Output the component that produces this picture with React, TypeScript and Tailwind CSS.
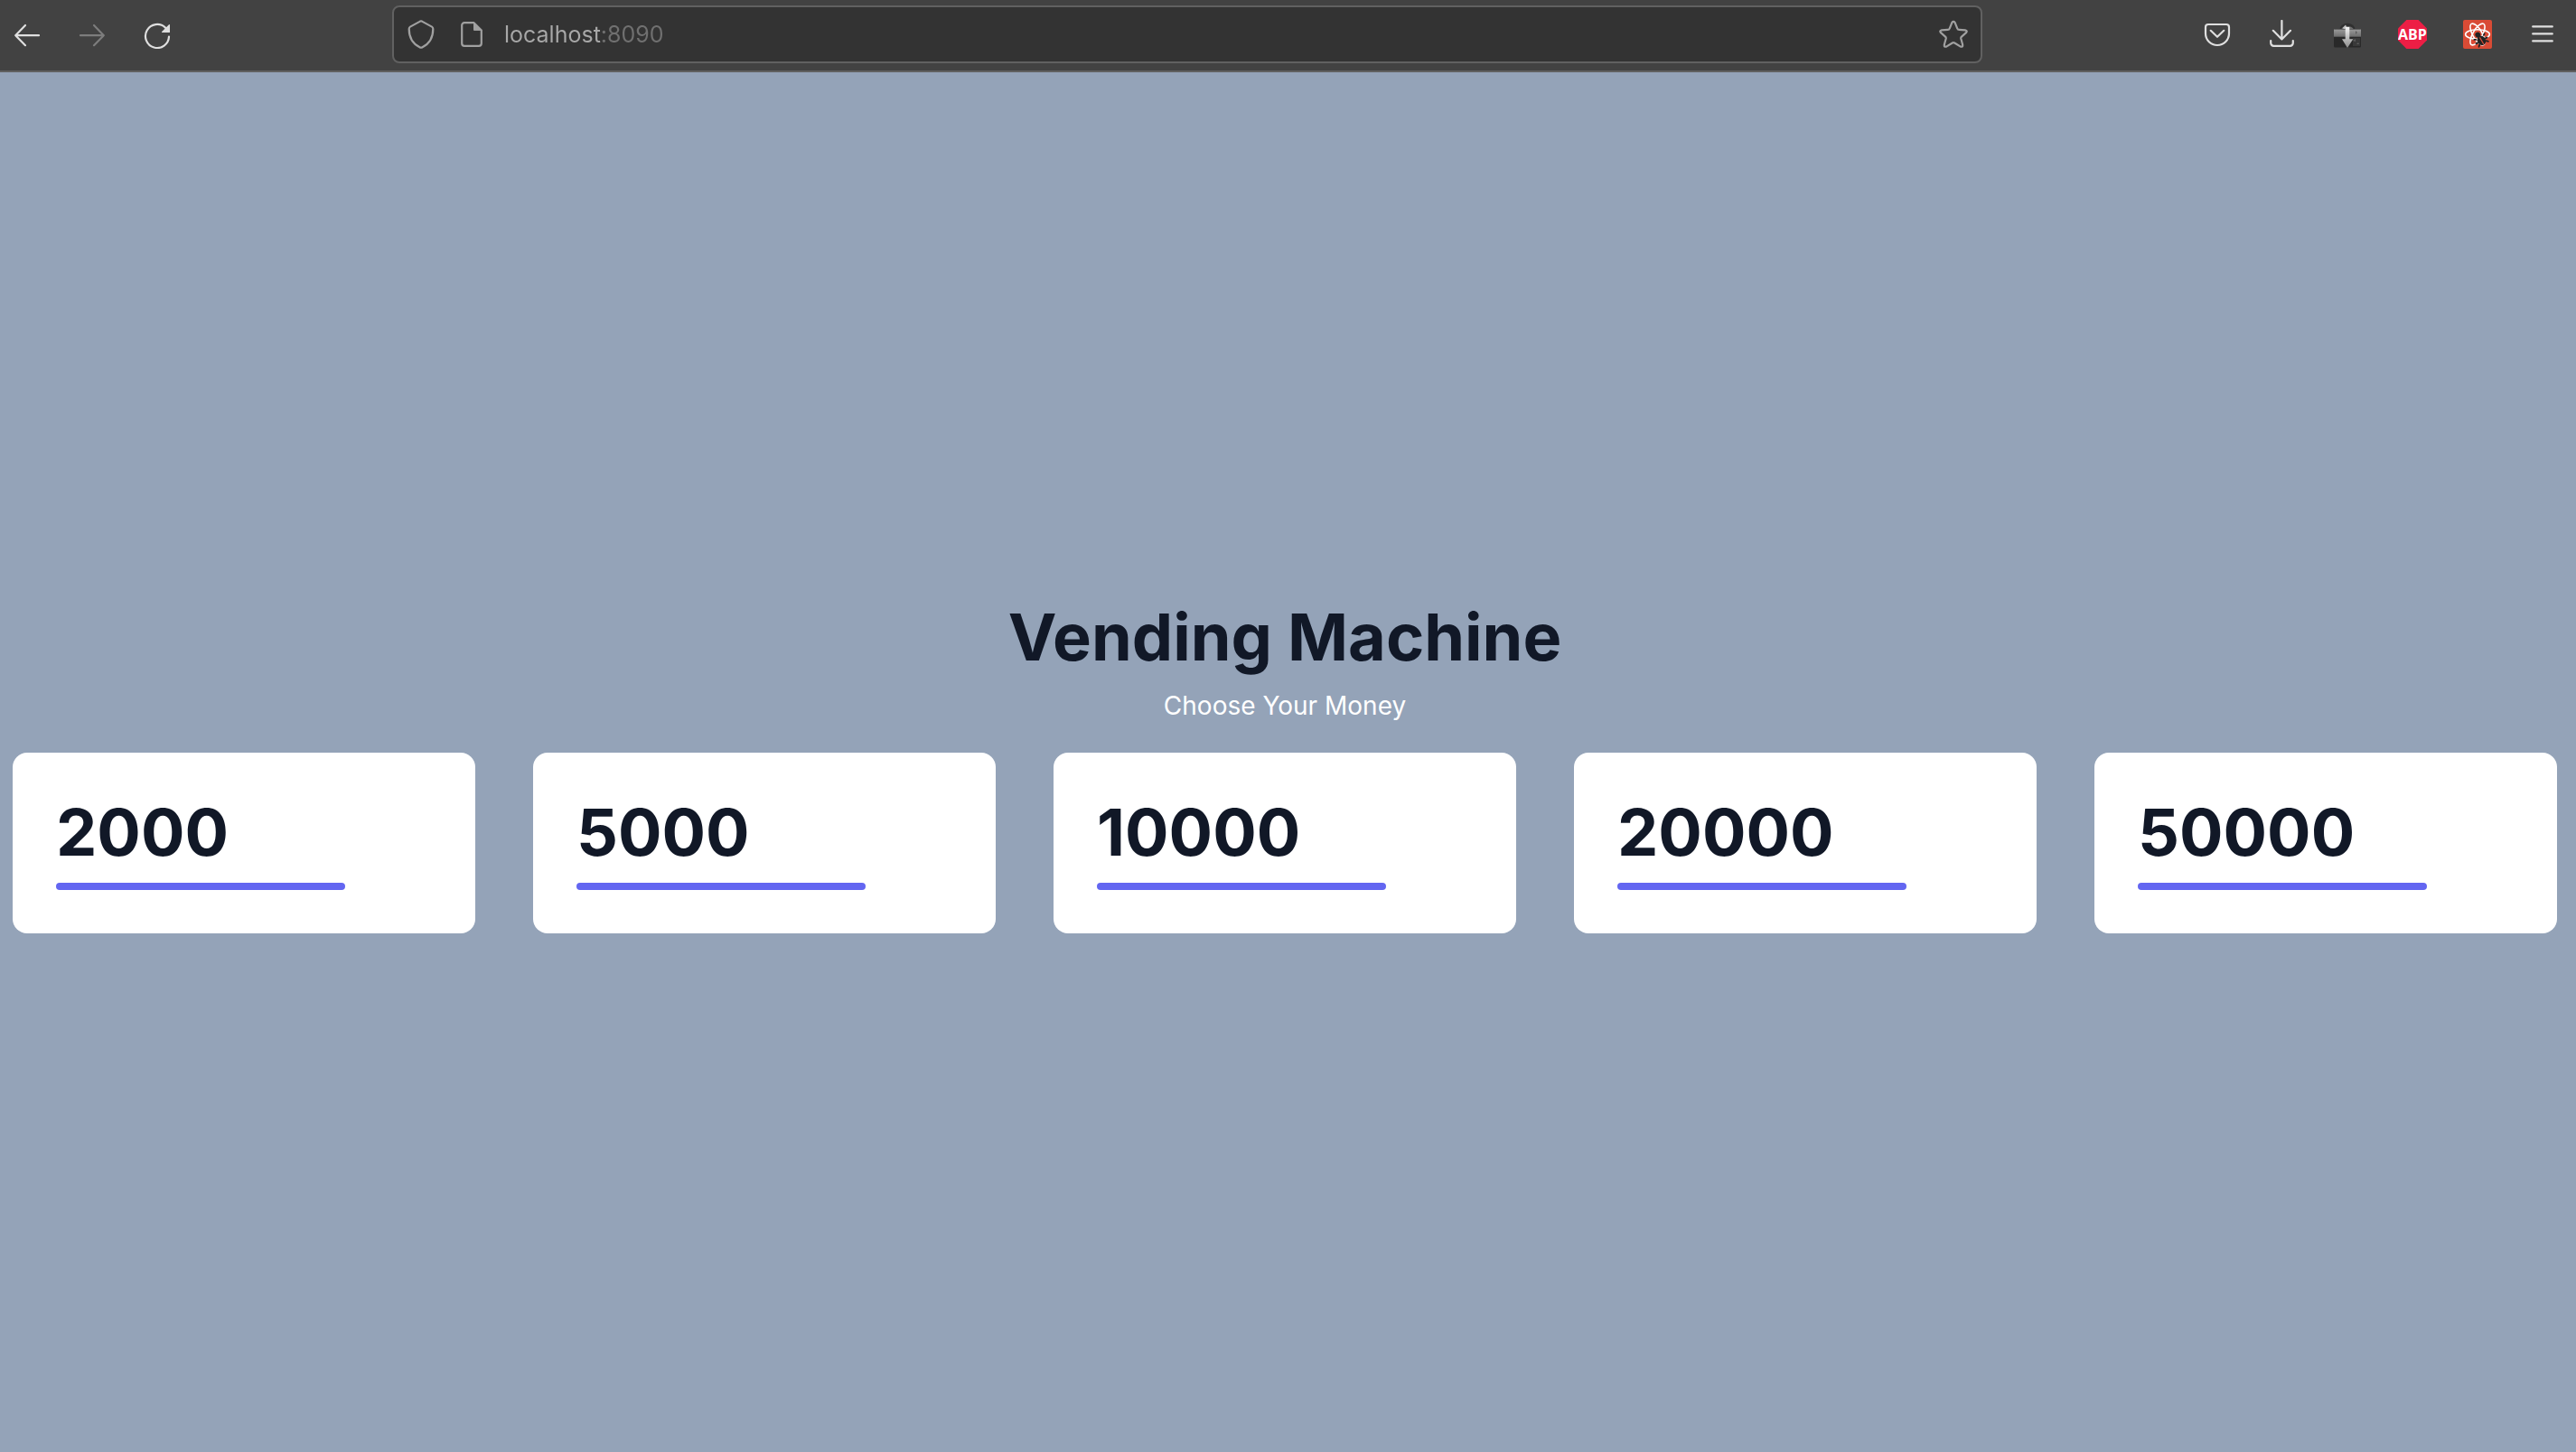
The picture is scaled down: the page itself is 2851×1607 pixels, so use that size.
import type { ReactNode } from "react";

const amounts = [2000, 5000, 10000, 20000, 50000];

function Icon({ children }: { children: ReactNode }) {
  return (
    <svg
      viewBox="0 0 32 32"
      className="size-8 shrink-0"
      fill="none"
      stroke="currentColor"
      strokeWidth="2.2"
      strokeLinecap="round"
      strokeLinejoin="round"
      aria-hidden="true"
    >
      {children}
    </svg>
  );
}

function ToolButton({ label, disabled, children }: { label: string; disabled?: boolean; children: ReactNode }) {
  return (
    <button type="button" aria-label={label} disabled={disabled} className="text-[#dfdfdf] disabled:text-[#7d7d7d]">
      <Icon>{children}</Icon>
    </button>
  );
}

function BrowserToolbar() {
  return (
    <header className="flex items-center border-b-2 border-[#606060] bg-[#424242] pt-1.5 pr-[21px] pb-2 pl-3.5">
      <nav aria-label="History" className="flex gap-10">
        <ToolButton label="Back">
          <path d="M29 17.2H3.2M14 6 3.2 17.2 14 28.2" />
        </ToolButton>
        <ToolButton label="Forward" disabled>
          <path d="M3 17.2h25.8M18 6l10.8 11.2L18 28.2" />
        </ToolButton>
        <ToolButton label="Reload">
          <path d="M29 18.5A13 13 0 1 1 25 8.6" />
          <path d="M29.4 5.6v7.8h-7.8z" fill="currentColor" strokeWidth="1.2" />
        </ToolButton>
      </nav>

      <div className="mx-[244px] flex h-16 flex-1 items-center rounded-lg border-2 border-[#616161] bg-[#333333] px-3.5 text-[#a0a0a0]">
        <button type="button" aria-label="Tracking protection">
          <Icon>
            <path d="M17 1.600 28 7.600Q29.300 8.400 29.300 10C29.300 19 25 26.500 17.500 30.300Q16 31.200 14.500 30.300C7 26.500 2.700 19 2.700 10Q2.700 8.400 4 7.600L15 1.600Q16 1.100 17 1.600Z" />
          </Icon>
        </button>
        <button type="button" aria-label="Site information" className="ml-6">
          <Icon>
            <path d="M18.5 3.2H8a2.800 2.800 0 0 0-2.800 2.800v20A2.800 2.800 0 0 0 8 28.800h16a2.800 2.800 0 0 0 2.800-2.800V11.500z" />
            <path d="M18.5 3.4v8h8z" fill="currentColor" strokeWidth="1" />
          </Icon>
        </button>
        <input
          type="text"
          aria-label="Address"
          defaultValue="localhost:8090"
          className="ml-5 min-w-0 flex-1 bg-linear-to-r from-[#a8a8a8] from-[108px] to-[#707070] to-[108px] bg-clip-text text-[25px] leading-8 text-transparent outline-none"
        />
        <button type="button" aria-label="Bookmark this page">
          <Icon>
            <path d="M14.4 2.900Q16 .8 17.600 2.900L20.200 9.300Q20.800 10.800 22.400 10.900L29 11.400Q31.800 12 30 14.200L25 18.600Q24 19.500 24.300 20.800L26.100 27.300Q26.600 30.400 23.900 29.600L17.200 25.500Q16 24.800 14.800 25.500L8.100 29.600Q5.400 30.400 5.900 27.300L7.700 20.800Q8 19.500 7 18.600L2 14.200Q.2 12 3 11.400L9.600 10.900Q11.200 10.800 11.800 9.300Z" />
          </Icon>
        </button>
      </div>

      <div className="flex gap-10">
        <ToolButton label="Save to Pocket">
          <path d="M3 8a3 3 0 0 1 3-3h20a3 3 0 0 1 3 3v7a13 13 0 0 1-26 0z" />
          <path d="m8.7 11.8 7.3 7 7.3-7" />
        </ToolButton>
        <ToolButton label="Downloads">
          <path d="M15.4 1v20.5M5.8 11.8l9.6 9.7 9.6-9.7" />
          <path d="M3.2 23v2.6a3.2 3.2 0 0 0 3.2 3.2h18.2a3.2 3.2 0 0 0 3.2-3.2V23" />
        </ToolButton>
        <ToolButton label="Download helper">
          <defs>
            <linearGradient id="band" x1="0" y1="0" x2="0" y2="1">
              <stop offset="0" stopColor="#9a9a9a" />
              <stop offset="1" stopColor="#6c6c6c" />
            </linearGradient>
            <linearGradient id="arrow" x1="0" y1="0" x2="0" y2="1">
              <stop offset="0" stopColor="#f4f4f4" />
              <stop offset="1" stopColor="#8c8c8c" />
            </linearGradient>
          </defs>
          <g stroke="none">
            <path d="M7.5 10.5a8.5 6.8 0 0 1 17 0z" fill="#303030" />
            <path d="M9 10.5a7.5 5.6 0 0 1 14 0z" fill="#6f6f6f" />
            <path d="M10.5 9 14 5.5l1 2-2 3z" fill="#c4c4c4" />
            <rect x="1" y="10" width="30" height="20.5" rx="1.5" fill="#292929" />
            <rect x="1" y="10.5" width="30" height="8.2" fill="url(#band)" />
            <path d="M22 20h8v9h-8z" fill="#393939" />
            <path d="m25 12 2 2-2 2zm-3 11 3-2v3zm4 4 2-2 1 2z" fill="#5c5c5c" />
            <path d="M13.7 8h4.6v13.3h4L16 31l-6-9.7h3.7z" fill="url(#arrow)" />
          </g>
        </ToolButton>
        <ToolButton label="Adblock Plus">
          <path d="M9.4 0h13.2L32 9.4v13.2L22.6 32H9.4L0 22.6V9.4z" fill="#ed1e45" stroke="none" />
          <text
            x="16"
            y="22"
            textAnchor="middle"
            fill="#ffffff"
            stroke="none"
            className="font-['Open_Sans'] text-[16px] font-bold"
          >
            ABP
          </text>
        </ToolButton>
        <ToolButton label="React Developer Tools">
          <rect width="32" height="32" rx="2" fill="#d94b35" stroke="none" />
          <g stroke="#ffffff" strokeWidth="1.6">
            <ellipse cx="16" cy="16" rx="13.4" ry="5.2" />
            <ellipse cx="16" cy="16" rx="13.4" ry="5.2" transform="rotate(60 16 16)" />
            <ellipse cx="16" cy="16" rx="13.4" ry="5.2" transform="rotate(120 16 16)" />
          </g>
          <g transform="rotate(-30 20 22)" stroke="#222222" strokeWidth="1.8">
            <ellipse cx="20" cy="23" rx="4.6" ry="5.4" fill="#222222" stroke="none" />
            <circle cx="19.600" cy="15.400" r="2.900" fill="#222222" stroke="none" />
            <path d="m15 19-1.500-1M15 23h-2M15.500 26l-1.500 1.500M25 19l1.500-1M25 23h2M24.500 26l1.500 1.500" />
            <path d="M20 19.500v8" stroke="#d94b35" strokeWidth="1.2" />
          </g>
        </ToolButton>
        <ToolButton label="Open menu">
          <path d="M5.2 7.4h21.6M5.2 15.4h21.6M5.2 23.4h21.6" />
        </ToolButton>
      </div>
    </header>
  );
}

function MoneyCard({ amount }: { amount: number }) {
  return (
    <button type="button" className="flex flex-col items-start rounded-2xl bg-white p-12 text-left">
      <span className="text-[72px] leading-20 font-bold">{amount}</span>
      <span className="mt-4 h-2 w-80 max-w-full rounded-sm bg-[#6366f1]" />
    </button>
  );
}

export default function App() {
  return (
    <div className="flex min-h-screen flex-col bg-[#94a3b8] font-['Inter',sans-serif] text-[#111827]">
      <BrowserToolbar />
      <main className="flex flex-1 flex-col justify-center pt-[11px] pr-[21px] pl-3.5">
        <h1 className="text-center text-[72px] leading-20 font-bold">Vending Machine</h1>
        <p className="mt-4 text-center text-[28px] leading-10 text-white">Choose Your Money</p>
        <div className="mt-8 grid grid-cols-5 gap-16">
          {amounts.map((amount) => (
            <MoneyCard key={amount} amount={amount} />
          ))}
        </div>
      </main>
    </div>
  );
}
